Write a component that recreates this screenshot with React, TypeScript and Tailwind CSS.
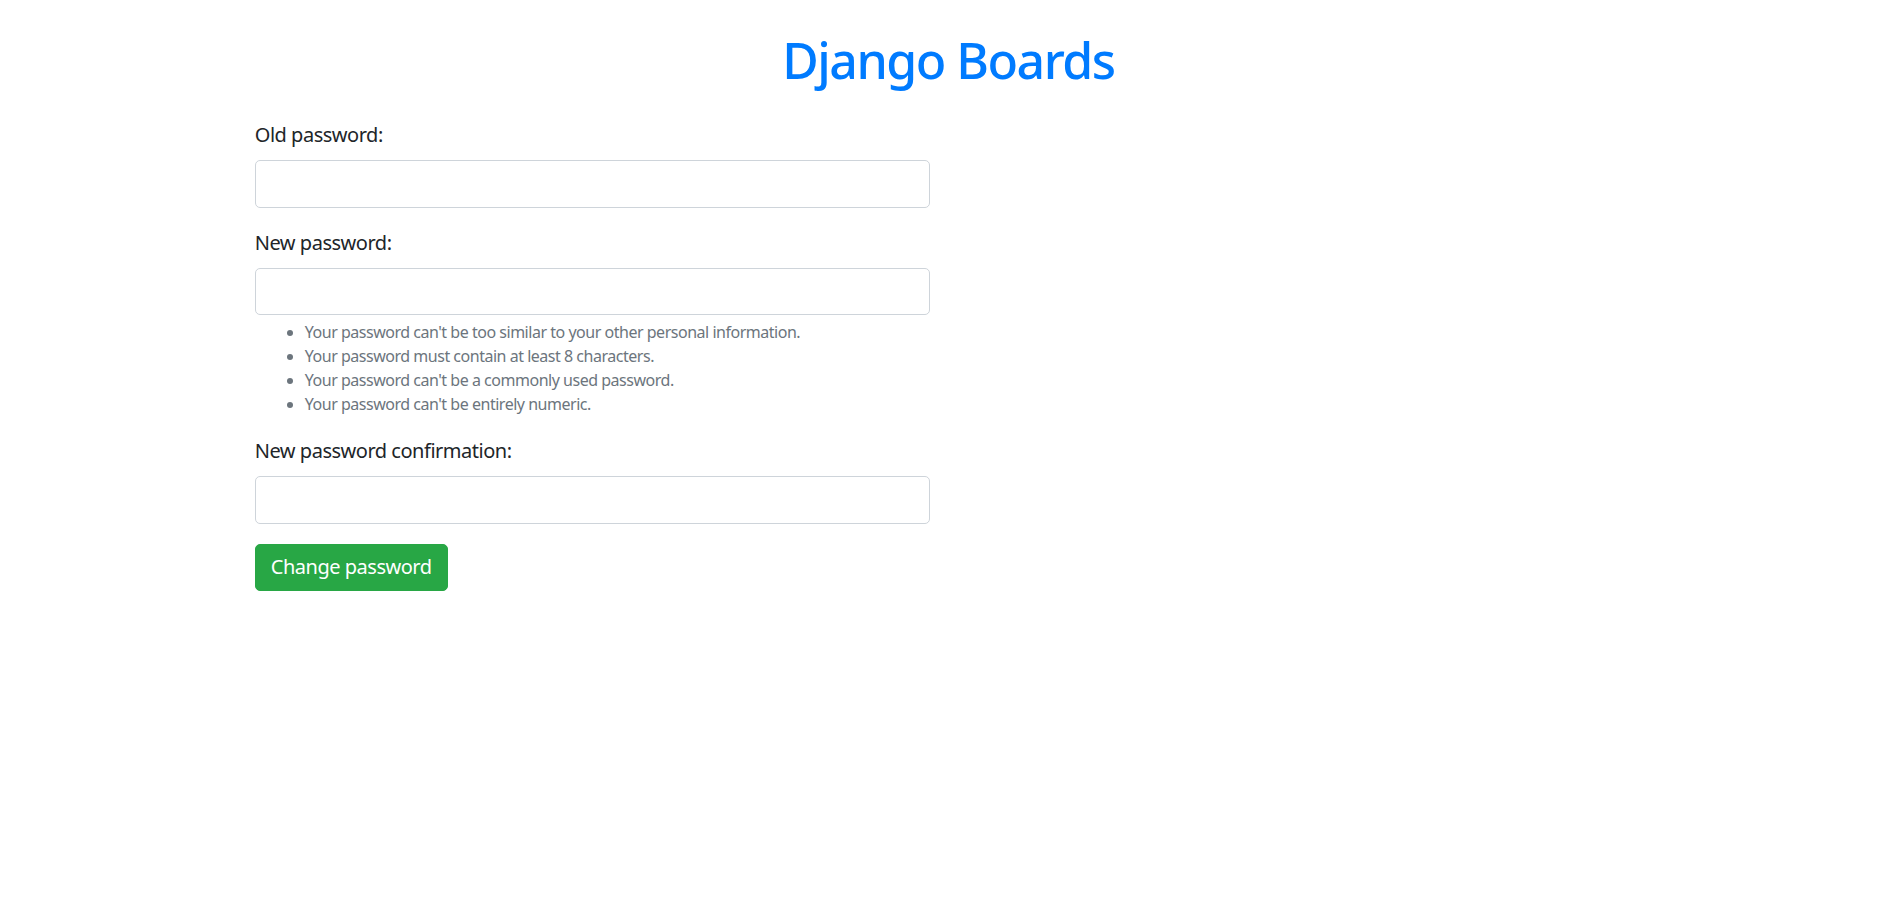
import React from 'react';

const helpItems = [
  "Your password can't be too similar to your other personal information.",
  'Your password must contain at least 8 characters.',
  "Your password can't be a commonly used password.",
  "Your password can't be entirely numeric.",
];

const Field: React.FC<{ label: string; id: string; children?: React.ReactNode }> = ({ label, id, children }) => (
  <div className="mb-[20px]">
    <label htmlFor={id} className="block mb-[10px] text-[20px] leading-[30px] text-[#212529]">
      {label}
    </label>
    <input
      id={id}
      type="password"
      className="block w-full h-[47.5px] px-[15px] border border-[#ced4da] rounded-[5px] bg-white text-[20px] outline-none"
    />
    {children}
  </div>
);

const App: React.FC = () => {
  return (
    <div className="min-h-screen bg-white font-['Noto_Sans',sans-serif] tracking-[-0.03em]">
      <div className="mx-auto w-[1425px] px-[18.75px]">
        <h1 className="my-[30px] text-center text-[50px] leading-[60px] font-medium tracking-[-0.03em] text-[#007bff]">
          Django Boards
        </h1>
        <form className="w-[675px]" onSubmit={(e) => e.preventDefault()}>
          <Field label="Old password:" id="old" />
          <Field label="New password:" id="new1">
            <small className="block mt-[5px] text-[16px] leading-[24px] text-[#6c757d]">
              <ul className="list-disc pl-[50px]">
                {helpItems.map((item) => (
                  <li key={item}>{item}</li>
                ))}
              </ul>
            </small>
          </Field>
          <Field label="New password confirmation:" id="new2" />
          <button
            type="submit"
            className="px-[15px] py-[7.5px] border border-[#28a745] rounded-[5px] bg-[#28a745] text-white text-[20px] leading-[30px]"
          >
            Change password
          </button>
        </form>
      </div>
    </div>
  );
};

export default App;
